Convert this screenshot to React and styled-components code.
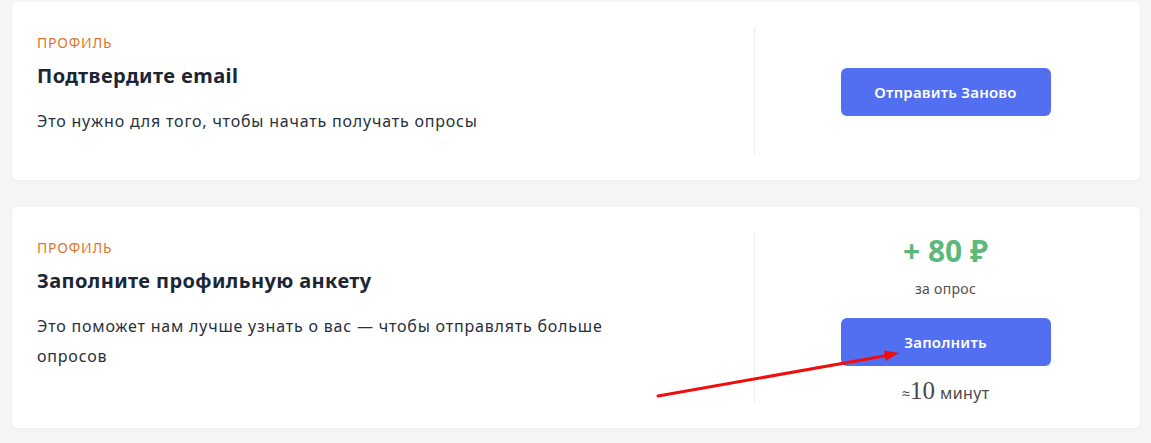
import React from 'react';
import styled, { createGlobalStyle } from 'styled-components';

const GlobalStyle = createGlobalStyle`
  html, body {
    margin: 0;
    background: #f5f5f5;
  }
  body {
    font-family: "Noto Sans", "Open Sans", sans-serif;
    -webkit-font-smoothing: antialiased;
  }
`;

const Page = styled.main`
  position: relative;
  display: flex;
  flex-direction: column;
  gap: 27px;
  padding: 2px 11px 12px 12px;
`;

const Card = styled.section`
  display: flex;
  background: #ffffff;
  border-radius: 6px;
  box-shadow: 0 1px 4px rgba(0, 0, 0, 0.035);
  padding: 25px 0 25px 25px;
`;

const Info = styled.div`
  flex: 1;
  display: flex;
  flex-direction: column;
  padding: 6px 0 19px;
`;

const Category = styled.div`
  font-size: 14px;
  line-height: 20px;
  letter-spacing: 0.8px;
  color: #d9772f;
  text-transform: uppercase;
  margin-bottom: 9px;
`;

const Title = styled.h2`
  margin: 0 0 16px;
  font-size: 20px;
  line-height: 28px;
  font-weight: 700;
  letter-spacing: 0.4px;
  color: #1b2636;
`;

const Description = styled.p`
  margin: 0;
  max-width: 610px;
  font-size: 16px;
  line-height: 30px;
  letter-spacing: 0.8px;
  color: #27303c;
`;

const Reward = styled.div`
  width: 381px;
  padding: 1px 4px 0 0;
  border-left: 1px solid #ececec;
  display: flex;
  flex-direction: column;
  align-items: center;
  justify-content: center;
`;

const Price = styled.div`
  font-size: 30px;
  line-height: 36px;
  font-weight: 700;
  color: #5cb97c;
`;

const PerSurvey = styled.div`
  margin-top: 10px;
  font-size: 14px;
  line-height: 20px;
  letter-spacing: 0.3px;
  color: #4f4f4f;
`;

const ActionButton = styled.button`
  width: 210px;
  height: 48px;
  margin-top: ${({ $offset }) => $offset || 0}px;
  border: none;
  border-radius: 6px;
  background: #516ff0;
  color: #ffffff;
  font-family: inherit;
  font-size: 15px;
  font-weight: 600;
  letter-spacing: 0.2px;
  cursor: pointer;
`;

const Duration = styled.div`
  margin-top: 13px;
  height: 24px;
  line-height: 24px;
  color: #4a4a4a;
  display: flex;
  align-items: baseline;
  overflow: visible;
`;

const Approx = styled.span`
  font-size: 15px;
  line-height: 24px;
`;

const Minutes = styled.span`
  font-family: "Liberation Serif", "DejaVu Serif", serif;
  font-size: 25px;
  line-height: 24px;
  margin-right: 5px;
`;

const Unit = styled.span`
  font-size: 16px;
  line-height: 24px;
  letter-spacing: 0.4px;
`;

const Pointer = styled.svg`
  position: absolute;
  left: 0;
  top: 0;
  pointer-events: none;
`;

export default function App() {
  return (
    <>
      <GlobalStyle />
      <Page>
        <Card>
          <Info>
            <Category>Профиль</Category>
            <Title>Подтвердите email</Title>
            <Description>Это нужно для того, чтобы начать получать опросы</Description>
          </Info>
          <Reward>
            <ActionButton>Отправить Заново</ActionButton>
          </Reward>
        </Card>

        <Card>
          <Info>
            <Category>Профиль</Category>
            <Title>Заполните профильную анкету</Title>
            <Description>
              Это поможет нам лучше узнать о вас — чтобы отправлять больше опросов
            </Description>
          </Info>
          <Reward>
            <Price>+ 80 ₽</Price>
            <PerSurvey>за опрос</PerSurvey>
            <ActionButton $offset={19}>Заполнить</ActionButton>
            <Duration>
              <Approx>≈</Approx>
              <Minutes>10</Minutes>
              <Unit>минут</Unit>
            </Duration>
          </Reward>
        </Card>

        <Pointer width="1151" height="443" viewBox="0 0 1151 443">
          <line x1="658" y1="396" x2="887" y2="355.5" stroke="#f20d0d" strokeWidth="3" strokeLinecap="round" />
          <polygon points="899,353 885.8,361 884,350.4" fill="#f20d0d" />
        </Pointer>
      </Page>
    </>
  );
}
